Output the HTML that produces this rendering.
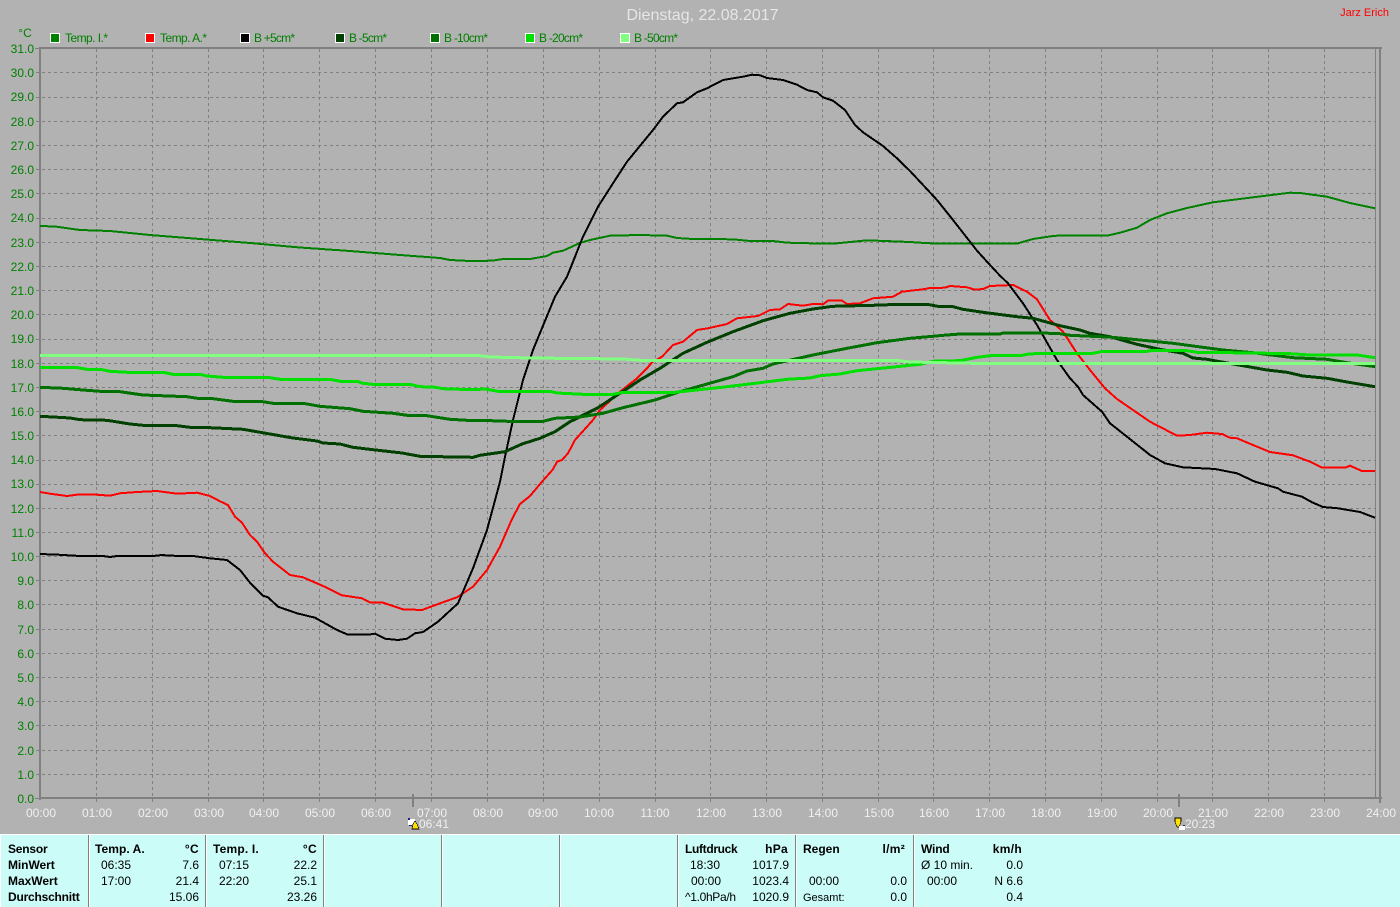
<!DOCTYPE html>
<html>
<head>
<meta charset="utf-8">
<style>
html,body{margin:0;padding:0;width:1400px;height:907px;overflow:hidden;background:#b2b2b2}
svg{display:block;position:absolute;left:0;top:0}
text{font-family:"Liberation Sans",sans-serif;font-size:12px}
.g{fill:#008000}
.w{fill:#f0f0f0}
.k{fill:#000}
.b{fill:#000;font-weight:bold;letter-spacing:.3px}
.e{text-anchor:end}
.m{text-anchor:middle}
.c{fill:none;stroke-linejoin:round;stroke-linecap:butt;shape-rendering:crispEdges}
</style>
</head>
<body>
<svg width="1400" height="907" viewBox="0 0 1400 907" xmlns="http://www.w3.org/2000/svg">
<rect width="1400" height="907" fill="#b2b2b2"/>
<text x="702.5" y="20" class="m" style="font-size:16px;fill:#e6e6e6">Dienstag, 22.08.2017</text>
<text x="1389" y="16" class="e" style="font-size:11px;fill:#ff0000">Jarz Erich</text>
<text x="25" y="37" class="m g">°C</text>

<g stroke="#808080" stroke-width="1" stroke-dasharray="3 3" fill="none" shape-rendering="crispEdges">
<path d="M36 774.5H1375M36 750.5H1375M36 725.5H1375M36 701.5H1375M36 677.5H1375M36 653.5H1375M36 629.5H1375M36 604.5H1375M36 580.5H1375M36 556.5H1375M36 532.5H1375M36 508.5H1375M36 484.5H1375M36 460.5H1375M36 435.5H1375M36 411.5H1375M36 387.5H1375M36 363.5H1375M36 339.5H1375M36 314.5H1375M36 290.5H1375M36 266.5H1375M36 242.5H1375M36 218.5H1375M36 193.5H1375M36 169.5H1375M36 145.5H1375M36 121.5H1375M36 97.5H1375M36 72.5H1375"/>
<path d="M96.5 49V802M152.5 49V802M208.5 49V802M263.5 49V802M319.5 49V802M375.5 49V802M431.5 49V802M487.5 49V802M543.5 49V802M599.5 49V802M655.5 49V802M710.5 49V802M766.5 49V802M822.5 49V802M878.5 49V802M933.5 49V802M989.5 49V802M1045.5 49V802M1101.5 49V802M1157.5 49V802M1212.5 49V802M1268.5 49V802M1324.5 49V802"/>
</g>
<g fill="#808080" shape-rendering="crispEdges">
<rect x="39" y="47" width="1343" height="2"/>
<rect x="39" y="47" width="2" height="753"/>
<rect x="39" y="797" width="1343" height="2"/>
<rect x="1379" y="47" width="2" height="756"/>
<rect x="1375" y="49" width="1" height="749"/>
<rect x="35" y="48" width="5" height="1"/>
<rect x="35" y="798" width="5" height="1"/>
<rect x="412" y="794" width="2" height="13"/>
<rect x="1178" y="794" width="2" height="13"/>
</g>

<polyline class="c" stroke="#008000" stroke-width="2" points="40,226 55,226.5 80,230 110,231 150,235 200,239 250,243 300,247.5 350,251 400,255 440,258 450,260 470,261 492,260.7 503,259 530,259 547,256 553,252.7 563,250.7 580,243 590,240 610,235.7 640,235 667,235.7 677,238 693,239 733,239.3 750,241 773,241 787,242.7 807,243 813,243.7 837,243.3 857,241.3 867,240.3 910,242 920,242.7 938,243.7 1018,243.3 1033,239 1053,236 1063,235.3 1107,235.7 1120,232.7 1137,227.7 1150,220 1167,213.3 1187,208 1213,202.3 1253,197.3 1290,192.7 1300,193 1327,196.7 1350,203 1375,208.3"/>
<polyline class="c" stroke="#ff0000" stroke-width="2" points="40,492 50,493.7 67,496 77,494.7 97,494.7 110,495.7 120,493.3 137,492 157,491 177,493.7 197,492.7 210,496 220,501.3 228,505 235,516.7 242,522.7 250,535 257,541.7 265,553.3 273,561.7 290,575 303,577.3 323,586 342,595.3 362,598.3 370,602.3 383,602.7 403,609.3 422,610 440,603.3 457,597.3 473,586.7 487,570 500,546.7 512,519 520,504 530,496 542,481.7 553,469.3 557,461.7 562,460 568,453.3 575,440 593,420 600,410 620,391.7 637,378.3 647,368.3 652,362.3 662,356.7 673,345 683,341.7 697,330 708,328.3 727,324 737,318.3 758,316 770,310 780,309.3 788,304 803,305.7 813,304 823,304.3 828,300.7 842,300.7 847,304 860,303.3 873,298.3 893,296.7 902,291.7 923,289.3 930,288 945,287.7 950,286 967,287.3 975,289.7 983,289 990,286 1013,285 1027,291.7 1037,299.3 1050,320 1063,331.7 1077,353.3 1090,370 1105,388.3 1117,399 1133,410 1150,421.7 1177,435.7 1190,435 1207,432.7 1222,434 1230,437.7 1237,438.3 1253,445 1270,452 1293,455.3 1310,461.7 1322,467.7 1345,467.7 1350,465.7 1362,471 1375,471"/>
<polyline class="c" stroke="#000000" stroke-width="2" points="40,554 58,554.7 80,556 103,556 110,557 117,556 153,556 162,555 170,555.7 193,556 210,558.3 227,560 240,570 250,582.7 263,595.7 268,597.3 278,606.7 297,613.3 315,617.7 337,630 348,634.7 368,634.7 375,633.7 385,638.7 398,640 407,638.7 415,633.3 423,632 438,621.7 458,603.3 473,568.3 487,530 500,481.7 505,456.7 513,420 523,380 533,350 555,296.7 567,276.7 583,236.7 598,206.7 613,183.3 627,161.7 653,130 663,116.7 677,103.3 683,102.3 697,92.3 707,88.3 723,80 743,76.7 752,74.7 760,75.3 767,78 783,80 797,84.7 807,90 817,92.3 823,97.3 833,100.7 845,110 855,125 863,132.3 883,146 897,158.3 910,171 920,181.7 937,200 953,220 970,241.7 977,250.7 987,261.7 1000,275.7 1008,283.3 1023,303.3 1037,325 1057,360 1070,378.3 1078,386.7 1083,395 1102,411.7 1110,423.3 1127,436.7 1150,455 1165,463.3 1183,467.3 1215,469 1237,473.3 1255,481.7 1278,488.3 1283,491.7 1302,496.7 1312,502.3 1323,507 1338,508.3 1360,512 1375,517.7"/>
<polyline class="c" stroke="#004000" stroke-width="3" points="40,416.3 53,417 70,418 80,419.7 107,420.3 130,424 147,425.7 177,425.7 190,427.3 210,427.7 243,429.3 270,434 293,438 317,441 323,443 340,444 353,447.3 373,449.7 402,453 420,456.3 440,456.7 473,457.3 480,455.3 505,451.7 522,444 540,438.3 555,431.7 570,421.7 597,408.3 620,393.3 640,380 660,368.3 683,353.3 707,342.3 733,331.7 763,320.7 790,313.3 813,309 833,306.3 873,305.3 900,304.3 927,304.3 940,306.7 953,306.7 963,309.3 983,312.3 1017,316.7 1033,318.3 1060,325.7 1080,330 1090,333.3 1110,336.7 1137,344.3 1160,349.3 1183,353.3 1193,358 1207,359.3 1220,361.7 1267,370 1287,372.3 1303,376 1327,378.3 1347,382 1375,386.7"/>
<polyline class="c" stroke="#007000" stroke-width="3" points="40,387.3 63,388.3 83,390 100,391.3 120,391.7 143,395 187,396.7 200,398.7 213,398.7 233,401.3 260,401.3 273,403.3 303,403.3 320,406.3 350,408.7 363,411.3 393,413.3 407,415.3 427,415.7 437,417.3 450,419.3 467,420.3 480,420.3 508,421.3 543,421.3 555,418.3 580,417 603,413.3 623,407.7 655,400 680,391.7 707,384 733,376.7 747,371 763,368.3 773,364 813,355 847,348.3 877,342.7 910,338.3 947,335 960,334 1000,334 1003,333 1057,333.3 1070,335.3 1113,337.3 1147,340.7 1173,343.3 1203,347.3 1223,350 1253,352.7 1293,357.7 1327,359.3 1347,362.7 1375,366.7"/>
<polyline class="c" stroke="#00e000" stroke-width="3" points="40,367.3 75,367.3 87,369.3 102,369.7 110,371.3 127,372.3 163,372.3 173,374.3 200,374.3 207,376 223,377.3 267,377.3 280,379.3 330,379.3 340,381.3 357,381.3 363,383.3 373,384.3 410,384.3 420,386.7 433,387 443,388.7 473,389.7 485,389 498,391.3 550,391.3 557,393 583,394.3 613,394.3 623,392.3 675,392.3 703,389.3 727,386.7 760,382.7 787,379.3 810,378 820,375.7 840,374 857,370.7 887,367.7 913,365 920,364.3 935,361 960,360.7 977,357.3 990,355.7 1020,355.7 1027,354.3 1040,353.3 1093,353.3 1103,351.3 1147,351.3 1153,350.3 1187,350.7 1197,352.3 1253,353 1290,353.7 1310,355 1357,355 1375,357.7"/>
<polyline class="c" stroke="#80ff80" stroke-width="3" points="40,355.5 478,355.5 490,357 530,358 623,359 643,360.5 897,360.5 910,362 983,363.5 1375,363.5"/>

<g class="g" text-anchor="end">
<text x="34" y="53">31.0</text><text x="34" y="77">30.0</text><text x="34" y="101">29.0</text><text x="34" y="126">28.0</text><text x="34" y="150">27.0</text><text x="34" y="174">26.0</text><text x="34" y="198">25.0</text><text x="34" y="222">24.0</text><text x="34" y="247">23.0</text><text x="34" y="271">22.0</text><text x="34" y="295">21.0</text><text x="34" y="319">20.0</text><text x="34" y="343">19.0</text><text x="34" y="368">18.0</text><text x="34" y="392">17.0</text><text x="34" y="416">16.0</text><text x="34" y="440">15.0</text><text x="34" y="464">14.0</text><text x="34" y="488">13.0</text><text x="34" y="513">12.0</text><text x="34" y="537">11.0</text><text x="34" y="561">10.0</text><text x="34" y="585">9.0</text><text x="34" y="609">8.0</text><text x="34" y="634">7.0</text><text x="34" y="658">6.0</text><text x="34" y="682">5.0</text><text x="34" y="706">4.0</text><text x="34" y="730">3.0</text><text x="34" y="755">2.0</text><text x="34" y="779">1.0</text><text x="34" y="803">0.0</text>
</g>

<g class="w" text-anchor="middle">
<text x="41" y="817">00:00</text><text x="97" y="817">01:00</text><text x="153" y="817">02:00</text><text x="209" y="817">03:00</text><text x="264" y="817">04:00</text><text x="320" y="817">05:00</text><text x="376" y="817">06:00</text><text x="432" y="817">07:00</text><text x="488" y="817">08:00</text><text x="543" y="817">09:00</text><text x="599" y="817">10:00</text><text x="655" y="817">11:00</text><text x="711" y="817">12:00</text><text x="767" y="817">13:00</text><text x="823" y="817">14:00</text><text x="879" y="817">15:00</text><text x="934" y="817">16:00</text><text x="990" y="817">17:00</text><text x="1046" y="817">18:00</text><text x="1102" y="817">19:00</text><text x="1158" y="817">20:00</text><text x="1213" y="817">21:00</text><text x="1269" y="817">22:00</text><text x="1325" y="817">23:00</text><text x="1381" y="817">24:00</text>
</g>
<text x="419" y="828" class="w">06:41</text>
<text x="1185" y="828" class="w">20:23</text>

<g shape-rendering="crispEdges">
<rect x="408" y="819" width="7" height="6" fill="#ffffff"/>
<rect x="408" y="818" width="2" height="2" fill="#202080"/>
<rect x="409" y="825" width="3" height="1" fill="#202080"/>
<polygon points="415,821 417,824 419,829 412,829 413,824" fill="#ffe000" stroke="#000" stroke-width="0.6"/>
<polygon points="1175,818 1181,818 1181,822 1179,827 1177,827 1175,822" fill="#ffe000" stroke="#000" stroke-width="0.6"/>
<rect x="1179" y="826" width="6" height="4" fill="#ffffff"/>
<rect x="1183" y="825" width="2" height="1" fill="#202080"/>
</g>

<g>
<rect x="50.5" y="33.5" width="9" height="9" fill="#008000" stroke="#fff"/>
<rect x="145.5" y="33.5" width="9" height="9" fill="#ff0000" stroke="#fff"/>
<rect x="240.5" y="33.5" width="9" height="9" fill="#000000" stroke="#fff"/>
<rect x="335.5" y="33.5" width="9" height="9" fill="#004000" stroke="#fff"/>
<rect x="430.5" y="33.5" width="9" height="9" fill="#007000" stroke="#fff"/>
<rect x="525.5" y="33.5" width="9" height="9" fill="#00e000" stroke="#fff"/>
<rect x="620.5" y="33.5" width="9" height="9" fill="#80ff80" stroke="#fff"/>
</g>
<g class="g">
<text x="65" y="42" textLength="43">Temp. I.*</text>
<text x="160" y="42" textLength="47">Temp. A.*</text>
<text x="254" y="42" textLength="41">B +5cm*</text>
<text x="349" y="42" textLength="38">B -5cm*</text>
<text x="444" y="42" textLength="44">B -10cm*</text>
<text x="539" y="42" textLength="44">B -20cm*</text>
<text x="634" y="42" textLength="44">B -50cm*</text>
</g>

<rect x="0" y="834" width="1400" height="73" fill="#ccfcf8"/>
<rect x="0" y="834" width="1400" height="1" fill="#ffffff"/>
<rect x="0" y="834" width="1" height="73" fill="#ffffff"/>
<g shape-rendering="crispEdges">
<g fill="#808080">
<rect x="88" y="835" width="1" height="72"/><rect x="205" y="835" width="1" height="72"/><rect x="323" y="835" width="1" height="72"/><rect x="441" y="835" width="1" height="72"/><rect x="559" y="835" width="1" height="72"/><rect x="677" y="835" width="1" height="72"/><rect x="795" y="835" width="1" height="72"/><rect x="913" y="835" width="1" height="72"/>
</g>
<g fill="#ffffff">
<rect x="89" y="835" width="1" height="72"/><rect x="206" y="835" width="1" height="72"/><rect x="324" y="835" width="1" height="72"/><rect x="442" y="835" width="1" height="72"/><rect x="560" y="835" width="1" height="72"/><rect x="678" y="835" width="1" height="72"/><rect x="796" y="835" width="1" height="72"/><rect x="914" y="835" width="1" height="72"/>
</g>
</g>

<g class="b">
<text x="8" y="853" textLength="40">Sensor</text>
<text x="8" y="869" textLength="47">MinWert</text>
<text x="8" y="885" textLength="50">MaxWert</text>
<text x="8" y="901" textLength="72">Durchschnitt</text>
<text x="95" y="853" textLength="50">Temp. A.</text>
<text x="213" y="853" textLength="46">Temp. I.</text>
<text x="685" y="853" textLength="53">Luftdruck</text>
<text x="803" y="853" textLength="37">Regen</text>
<text x="921" y="853" textLength="29">Wind</text>
<text x="199" y="853" text-anchor="end">°C</text>
<text x="317" y="853" text-anchor="end">°C</text>
<text x="788" y="853" text-anchor="end">hPa</text>
<text x="905" y="853" text-anchor="end">l/m²</text>
<text x="1022" y="853" text-anchor="end">km/h</text>
</g>
<g class="k">
<text x="101" y="869">06:35</text><text x="101" y="885">17:00</text>
<text x="219" y="869">07:15</text><text x="219" y="885">22:20</text>
<text x="690" y="869">18:30</text><text x="691" y="885">00:00</text>
<text x="685" y="901" textLength="51">^1.0hPa/h</text>
<text x="809" y="885">00:00</text>
<text x="803" y="901" style="font-size:11px">Gesamt:</text>
<text x="921" y="869">Ø 10 min.</text>
<text x="927" y="885">00:00</text>
</g>
<g class="k" text-anchor="end">
<text x="199" y="869">7.6</text><text x="199" y="885">21.4</text><text x="199" y="901">15.06</text>
<text x="317" y="869">22.2</text><text x="317" y="885">25.1</text><text x="317" y="901">23.26</text>
<text x="789" y="869">1017.9</text><text x="789" y="885">1023.4</text><text x="789" y="901">1020.9</text>
<text x="907" y="885">0.0</text><text x="907" y="901">0.0</text>
<text x="1023" y="869">0.0</text><text x="1023" y="885">N 6.6</text><text x="1023" y="901">0.4</text>
</g>
</svg>
</body>
</html>
